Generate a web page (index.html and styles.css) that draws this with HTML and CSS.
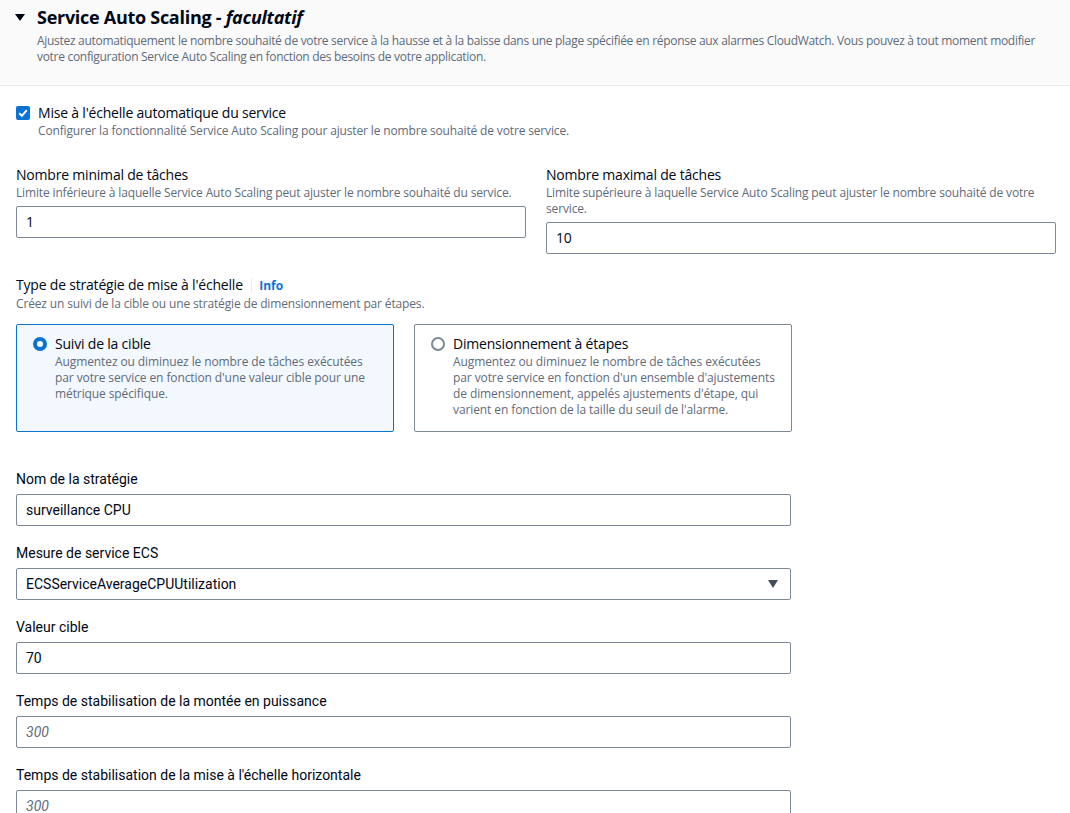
FILE: index.html
```html
<!DOCTYPE html>
<html lang="fr">
<head>
<meta charset="utf-8">
<title>Service Auto Scaling</title>
<link rel="stylesheet" href="styles.css">
</head>
<body>
<div class="page">
  <header class="header">
    <h2 class="title">
      <svg class="caret" width="10" height="8" viewBox="0 0 10 8"><polygon points="0,0 10,0 5,7" fill="#000716"/></svg>
      <span>Service Auto Scaling - <i>facultatif</i></span>
    </h2>
    <p class="header-desc">Ajustez automatiquement le nombre souhaité de votre service à la hausse et à la baisse dans une plage spécifiée en réponse aux alarmes CloudWatch. Vous pouvez à tout moment modifier votre configuration Service Auto Scaling en fonction des besoins de votre application.</p>
  </header>

  <div class="content">
    <div class="check-row">
      <span class="checkbox">
        <svg width="14" height="14" viewBox="0 0 14 14"><rect width="14" height="14" rx="2" fill="#0972d3"/><polyline points="3.2,7.2 5.9,9.8 10.8,4.2" fill="none" stroke="#fff" stroke-width="2"/></svg>
      </span>
      <div>
        <div class="check-label">Mise à l'échelle automatique du service</div>
        <div class="desc">Configurer la fonctionnalité Service Auto Scaling pour ajuster le nombre souhaité de votre service.</div>
      </div>
    </div>

    <div class="two-col">
      <div class="field">
        <div class="label">Nombre minimal de tâches</div>
        <div class="desc">Limite inférieure à laquelle Service Auto Scaling peut ajuster le nombre souhaité du service.</div>
        <div class="input">1</div>
      </div>
      <div class="field">
        <div class="label">Nombre maximal de tâches</div>
        <div class="desc">Limite supérieure à laquelle Service Auto Scaling peut ajuster le nombre souhaité de votre service.</div>
        <div class="input">10</div>
      </div>
    </div>

    <div class="type-block">
      <div class="label">Type de stratégie de mise à l'échelle <span class="sep"></span><a class="info">Info</a></div>
      <div class="desc">Créez un suivi de la cible ou une stratégie de dimensionnement par étapes.</div>
      <div class="tiles">
        <div class="tile selected">
          <span class="radio on"></span>
          <div>
            <div class="tile-title">Suivi de la cible</div>
            <div class="desc">Augmentez ou diminuez le nombre de tâches exécutées par votre service en fonction d'une valeur cible pour une métrique spécifique.</div>
          </div>
        </div>
        <div class="tile">
          <span class="radio"></span>
          <div>
            <div class="tile-title">Dimensionnement à étapes</div>
            <div class="desc">Augmentez ou diminuez le nombre de tâches exécutées par votre service en fonction d'un ensemble d'ajustements de dimensionnement, appelés ajustements d'étape, qui varient en fonction de la taille du seuil de l'alarme.</div>
          </div>
        </div>
      </div>
    </div>

    <div class="form">
      <div class="field">
        <div class="label c">Nom de la stratégie</div>
        <div class="input c">surveillance CPU</div>
      </div>
      <div class="field">
        <div class="label c">Mesure de service ECS</div>
        <div class="input c select">ECSServiceAverageCPUUtilization
          <svg class="sel-caret" width="10" height="8" viewBox="0 0 10 8"><polygon points="0,0 10,0 5,8" fill="#414d5c"/></svg>
        </div>
      </div>
      <div class="field">
        <div class="label c">Valeur cible</div>
        <div class="input c">70</div>
      </div>
      <div class="field">
        <div class="label c">Temps de stabilisation de la montée en puissance</div>
        <div class="input c placeholder">300</div>
      </div>
      <div class="field">
        <div class="label c">Temps de stabilisation de la mise à l'échelle horizontale</div>
        <div class="input c placeholder">300</div>
      </div>
    </div>
  </div>
</div>
</body>
</html>
```
FILE: styles.css
```css
* { box-sizing: border-box; }
html, body { margin: 0; padding: 0; background: #ffffff; }
body {
  font-family: "Open Sans", "Noto Sans", sans-serif;
  color: #000716;
  font-size: 14px;
  line-height: 20px;
  letter-spacing: -0.2px;
  overflow: hidden;
  height: 813px;
}
.header {
  background: #fafafa;
  border-bottom: 1px solid #e9ebed;
  padding: 6px 6px 20px 15px;
}
.title {
  margin: 0;
  display: flex;
  align-items: center;
  gap: 12px;
  font-size: 18px;
  line-height: 22px;
  font-weight: 700;
  letter-spacing: -0.28px;
}
.caret { flex: none; margin-top: 1px; }
.header-desc {
  margin: 5px 0 0 22px;
  font-size: 12px;
  line-height: 16px;
  color: #5f6b7a;
  letter-spacing: -0.3px;
}
.content { padding: 17px 14px 0 16px; }
.check-row { display: flex; gap: 8px; }
.checkbox { flex: none; padding-top: 3px; height: 17px; }
.checkbox svg { display: block; }
.desc { font-size: 12px; line-height: 16px; color: #5f6b7a; letter-spacing: -0.15px; }
.two-col {
  display: grid;
  grid-template-columns: 1fr 1fr;
  gap: 20px;
  margin-top: 26px;
}
.field { display: flex; flex-direction: column; }
.input {
  margin-top: 5px;
  height: 32px;
  border: 1px solid #7d8998;
  border-radius: 2px;
  padding: 0 9px;
  display: flex;
  align-items: center;
  font-size: 14px;
  color: #000716;
}
.type-block { margin-top: 21px; }
.sep {
  display: inline-block;
  width: 1px;
  height: 14px;
  background: #e9ebed;
  vertical-align: -2px;
  margin: 0 7px 0 5px;
}
.info { color: #0972d3; font-weight: 700; font-size: 12px; letter-spacing: 0; }
.tiles {
  display: grid;
  grid-template-columns: 378px 378px;
  gap: 20px;
  margin-top: 12px;
}
.tile {
  display: flex;
  gap: 8px;
  border: 1px solid #7d8998;
  border-radius: 2px;
  padding: 9px 13px 12px 16px;
  min-height: 108px;
}
.tile .desc { letter-spacing: -0.1px; }
.tile.selected { background: #f2f8fd; border-color: #0972d3; }
.radio {
  flex: none;
  width: 14px;
  height: 14px;
  margin-top: 3px;
  border-radius: 50%;
  border: 2px solid #7d8998;
  background: #fff;
}
.radio.on { border: 4px solid #0972d3; }
.tile-title { font-size: 14px; line-height: 20px; }
.form {
  width: 775px;
  margin-top: 37px;
  display: flex;
  flex-direction: column;
  gap: 17px;
}
.c { font-family: "Roboto", "Open Sans", sans-serif; letter-spacing: 0; }
.select { justify-content: space-between; padding-right: 12px; }
.placeholder { font-style: italic; color: #5f6b7a; }
```
